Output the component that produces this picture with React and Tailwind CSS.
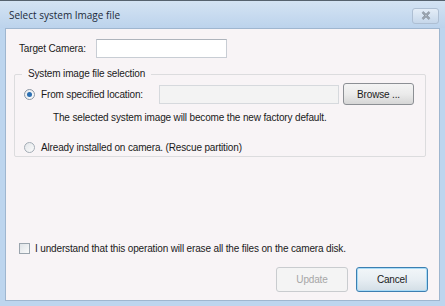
import React from "react";

export default function App() {
  const font = { fontFamily: '"Liberation Sans", Arial, sans-serif' };
  return (
    <div
      className="w-[445px] h-[306px] flex flex-col bg-[#bdd5ee] border-t border-[#56626e] overflow-hidden text-[10px] tracking-[-0.15px] text-[#1a1a1a]"
      style={font}
    >
      {/* title bar */}
      <div className="h-[27px] flex items-center justify-between pl-[9px] pr-[6px] bg-gradient-to-b from-[#d4e3f3] to-[#bcd3ec]">
        <span className="text-[10px] tracking-normal text-[#1c2a3a] pt-[2px]" style={{ fontFamily: '"Open Sans", "Noto Sans", sans-serif' }}>
          Select system Image file
        </span>
        <div className="w-[27px] h-[16px] mt-[2px] rounded-[3px] border border-[#aebfd3] bg-gradient-to-b from-[#e4edf7] to-[#c6d7ea] flex items-center justify-center">
          <svg width="10" height="9" viewBox="0 0 10 9">
            <path d="M1.5 1 L8.5 8 M8.5 1 L1.5 8" stroke="#6f7a86" strokeWidth="2.2" fill="none" />
            <path d="M1.5 1 L8.5 8 M8.5 1 L1.5 8" stroke="#e8eef5" strokeWidth="0.7" fill="none" />
          </svg>
        </div>
      </div>
      {/* client */}
      <div className="mx-[5px] h-[273px] bg-[#f8f4f6] border border-[#9fb6cf] flex flex-col">
        {/* target camera */}
        <div className="flex items-center mt-[10px] pl-[13px]">
          <span className="w-[77px]">Target Camera:</span>
          <div className="w-[131px] h-[19px] bg-white border border-[#c8cdd4] border-t-[#aeb4bc]" />
        </div>
        {/* group box */}
        <div className="relative mt-[16px] ml-[8px] w-[412px] h-[83px] border border-[#dcdcde] rounded-[2px] flex flex-col">
          <span className="absolute -top-[8px] left-[7px] px-[6px] bg-[#f8f4f6] leading-[14px]">
            System image file selection
          </span>
          <div className="flex items-center mt-[8px] pl-[9px]">
            <div className="w-[11px] h-[11px] rounded-full border border-[#8a96a3] bg-gradient-to-br from-[#e6eaee] to-[#fdfdfd] flex items-center justify-center">
              <div className="w-[5px] h-[5px] rounded-full bg-[#2c6fb2]" />
            </div>
            <span className="ml-[6px] w-[118px]">From specified location:</span>
            <div className="w-[180px] h-[19px] bg-[#f3f3f3] border border-[#d6d9dd]" />
            <div className="ml-[4px] w-[71px] h-[22px] rounded-[3px] border border-[#8c8f94] bg-gradient-to-b from-[#f4f4f4] via-[#ebebeb] to-[#d6d6d6] flex items-center justify-center">
              Browse ...
            </div>
          </div>
          <div className="pl-[38px] mt-[5px]">The selected system image will become the new factory default.</div>
          <div className="flex items-center mt-[15px] pl-[9px]">
            <div className="w-[11px] h-[11px] rounded-full border border-[#a3acb5] bg-gradient-to-br from-[#e3e6ea] to-[#fbfbfb]" />
            <span className="ml-[6px]">Already installed on camera. (Rescue partition)</span>
          </div>
        </div>
        {/* checkbox */}
        <div className="flex items-center mt-[84px] pl-[13px]">
          <div className="w-[11px] h-[11px] border border-[#9aa4ad] bg-gradient-to-br from-[#dfe3e7] to-[#fafafa]" />
          <span className="ml-[5px]">I understand that this operation will erase all the files on the camera disk.</span>
        </div>
        {/* buttons */}
        <div className="flex justify-end mt-[11px] pr-[11px] gap-[8px]">
          <div className="w-[72px] h-[25px] rounded-[3px] border border-[#c9cccf] bg-[#f4f4f4] text-[#a6a6a6] flex items-center justify-center">
            Update
          </div>
          <div className="w-[72px] h-[25px] rounded-[3px] border border-[#3c7fb1] bg-gradient-to-b from-[#f2f6f9] via-[#e7eef3] to-[#d3dee6] flex items-center justify-center shadow-[inset_0_0_0_1px_#a9dbf6]">
            Cancel
          </div>
        </div>
      </div>
    </div>
  );
}
